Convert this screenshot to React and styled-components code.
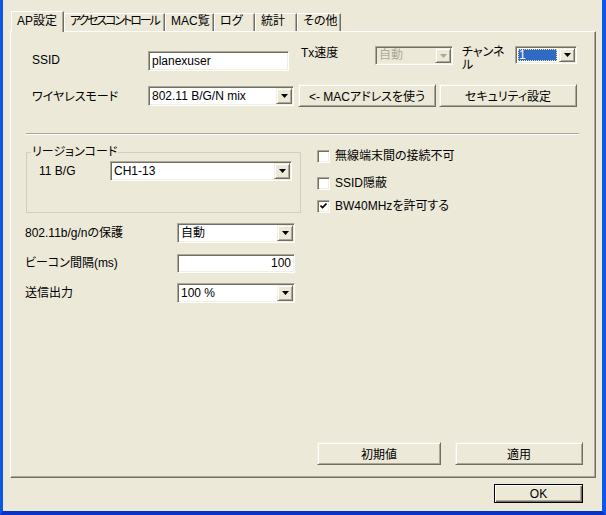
import React from 'react';
import styled, { createGlobalStyle, css } from 'styled-components';

const GlobalStyle = createGlobalStyle`
  html, body {
    margin: 0;
    padding: 0;
    background: #ece9d8;
  }
  body {
    font-family: "Liberation Sans", "Noto Sans CJK JP", sans-serif;
    font-size: 12px;
    color: #000;
    font-feature-settings: "palt";
  }
`;

const sunken = css`
  border: 1px solid;
  border-color: #aca899 #fff #fff #aca899;
  box-shadow: inset 1px 1px 0 #716f64, inset -1px -1px 0 #f1efe2;
  padding: 1px;
`;

const raised = css`
  border: 1px solid;
  border-color: #f1efe2 #716f64 #716f64 #f1efe2;
  box-shadow: inset 1px 1px 0 #fff, inset -1px -1px 0 #aca899;
`;

const StWindow = styled.div`
  width: 606px;
  height: 515px;
  box-sizing: border-box;
  background: #ece9d8;
  border-left: 3px solid #0b58e6;
  border-right: 4px solid #0b58e6;
  border-bottom: 4px solid #0832c8;
  display: flex;
  flex-direction: column;
  padding-top: 11px;
`;

const StTabStrip = styled.div`
  display: flex;
  align-items: flex-end;
  height: 20px;
  margin-left: 8px;
  position: relative;
  z-index: 1;
`;

const StTab = styled.div`
  box-sizing: border-box;
  width: ${({ $w }) => $w}px;
  height: ${({ $active }) => ($active ? 21 : 18)}px;
  margin-bottom: ${({ $active }) => ($active ? -1 : 0)}px;
  padding: ${({ $active }) => ($active ? '2px 0 0 5px' : '0 0 0 5px')};
  border-top: 1px solid #fff;
  border-left: 1px solid #fff;
  border-right: 1px solid #716f64;
  box-shadow: inset -1px 0 0 #aca899;
  background: #ece9d8;
  line-height: 15px;
  letter-spacing: ${({ $ls }) => $ls || 0}px;
  white-space: nowrap;
  overflow: hidden;
`;

const StPanel = styled.div`
  box-sizing: border-box;
  width: 586px;
  height: 447px;
  margin-left: 7px;
  border: 1px solid;
  border-color: #fff #716f64 #716f64 #fff;
  box-shadow: inset -1px -1px 0 #aca899;
  display: flex;
  flex-direction: column;
  padding-top: 14px;
`;

const StRow = styled.div`
  display: flex;
  align-items: flex-start;
  height: ${({ $h }) => $h}px;
  padding-left: ${({ $pl }) => $pl || 0}px;
`;

const StLabel = styled.div`
  flex: none;
  width: ${({ $w }) => $w}px;
  margin-left: ${({ $ml }) => $ml || 0}px;
  margin-top: ${({ $mt }) => $mt || 0}px;
  line-height: ${({ $lh }) => $lh || 14}px;
  white-space: nowrap;
`;

const StTextInput = styled.div`
  ${sunken};
  flex: none;
  box-sizing: border-box;
  width: ${({ $w }) => $w}px;
  height: ${({ $h }) => $h}px;
  margin-top: ${({ $mt }) => $mt || 0}px;
  background: #fff;
  padding: 1px 3px;
  line-height: ${({ $h }) => $h - 4}px;
  text-align: ${({ $right }) => ($right ? 'right' : 'left')};
`;

const StSelect = styled.div`
  ${sunken};
  flex: none;
  box-sizing: border-box;
  display: flex;
  width: ${({ $w }) => $w}px;
  height: ${({ $h }) => $h}px;
  margin-left: ${({ $ml }) => $ml || 0}px;
  margin-top: ${({ $mt }) => $mt || 0}px;
  background: ${({ $disabled }) => ($disabled ? '#ece9d8' : '#fff')};
  color: ${({ $disabled }) => ($disabled ? '#aca899' : '#000')};
`;

const StSelectValue = styled.div`
  flex: 1;
  padding-left: 2px;
  line-height: ${({ $h }) => $h - 4}px;
  white-space: nowrap;
  overflow: hidden;
`;

const StSelectHighlight = styled.div`
  flex: 1;
  margin: 1px 2px 1px 1px;
  padding-left: 1px;
  background: #316ac5;
  color: #fff;
  outline: 1px dotted #f5e38a;
  outline-offset: -1px;
  line-height: ${({ $h }) => $h - 6}px;
`;

const StArrowButton = styled.div`
  ${raised};
  box-sizing: border-box;
  width: 16px;
  flex: none;
  background: #ece9d8;
  display: flex;
  align-items: center;
  justify-content: center;
`;

const StButton = styled.button`
  ${raised};
  flex: none;
  box-sizing: border-box;
  width: ${({ $w }) => $w}px;
  height: ${({ $h }) => $h || 23}px;
  margin-left: ${({ $ml }) => $ml || 0}px;
  background: #ece9d8;
  font: inherit;
  color: #000;
  padding: 0;
  white-space: nowrap;
  ${({ $default }) =>
    $default &&
    css`
      border: 1px solid #000;
      box-shadow: inset 1px 1px 0 #fff, inset -1px -1px 0 #716f64,
        inset -2px -2px 0 #aca899;
    `};
`;

const StSeparator = styled.div`
  width: 553px;
  margin: 26px 0 0 15px;
  border-top: 1px solid #aca899;
  border-bottom: 1px solid #fff;
`;

const StLower = styled.div`
  display: flex;
  margin-top: 10px;
`;

const StLeftColumn = styled.div`
  display: flex;
  flex-direction: column;
  gap: 10px;
  padding-left: 14px;
`;

const StGroupBox = styled.fieldset`
  box-sizing: border-box;
  width: 275px;
  height: 68px;
  margin: 0 0 0 1px;
  padding: 0;
  border: 1px solid #d0d0bf;
  min-inline-size: auto;
`;

const StLegend = styled.legend`
  margin-left: 4px;
  padding: 0 1px;
  line-height: 14px;
`;

const StGroupBody = styled.div`
  display: flex;
  align-items: center;
  padding: 2px 0 0 12px;
`;

const StFormRow = styled.div`
  display: flex;
  align-items: center;
  height: 20px;
`;

const StRightColumn = styled.div`
  display: flex;
  flex-direction: column;
  margin-left: 16px;
`;

const StCheckRow = styled.div`
  display: flex;
  align-items: center;
  gap: 5px;
  height: 14px;
  margin-top: ${({ $mt }) => $mt}px;
  line-height: 14px;
  white-space: nowrap;
`;

const StCheckBox = styled.div`
  ${sunken};
  padding: 0;
  box-sizing: border-box;
  width: 13px;
  height: 13px;
  background: #fff;
  display: flex;
  align-items: center;
  justify-content: center;
`;

const StBottomRow = styled.div`
  display: flex;
  justify-content: flex-end;
  gap: 14px;
  margin-top: auto;
  padding: 0 12px 12px 0;
`;

const StFooter = styled.div`
  display: flex;
  justify-content: flex-end;
  padding: 6px 19px 0 0;
`;

const Arrow = ({ disabled }) => (
  <svg width="7" height="4" viewBox="0 0 7 4">
    <polygon points="0,0 7,0 3.5,4" fill={disabled ? '#aca899' : '#000'} />
  </svg>
);

const Select = ({ w, h = 20, ml, mt, value, disabled, focused }) => (
  <StSelect $w={w} $h={h} $ml={ml} $mt={mt} $disabled={disabled}>
    {focused ? (
      <StSelectHighlight $h={h}>{value}</StSelectHighlight>
    ) : (
      <StSelectValue $h={h}>{value}</StSelectValue>
    )}
    <StArrowButton>
      <Arrow disabled={disabled} />
    </StArrowButton>
  </StSelect>
);

const CheckItem = ({ checked, label, mt }) => (
  <StCheckRow $mt={mt}>
    <StCheckBox>
      {checked && (
        <svg width="7" height="7" viewBox="0 0 7 7">
          <polyline
            points="0.5,2.5 2.5,4.5 6.5,0.5"
            fill="none"
            stroke="#000"
            strokeWidth="1.6"
          />
        </svg>
      )}
    </StCheckBox>
    {label}
  </StCheckRow>
);

const tabs = [
  { label: 'AP設定', w: 53 },
  { label: 'アクセスコントロール', w: 101, ls: -2.1 },
  { label: 'MAC覧', w: 49 },
  { label: 'ログ', w: 41 },
  { label: '統計', w: 42 },
  { label: 'その他', w: 44 },
];

const App = () => {
  return (
    <>
      <GlobalStyle />
      <StWindow>
        <StTabStrip>
          {tabs.map((t, i) => (
            <StTab key={t.label} $w={t.w} $ls={t.ls} $active={i === 0}>
              {t.label}
            </StTab>
          ))}
        </StTabStrip>
        <StPanel>
          <StRow $h={38} $pl={21}>
            <StLabel $w={116} $mt={7}>SSID</StLabel>
            <StTextInput $w={141} $h={20} $mt={5}>
              planexuser
            </StTextInput>
            <StLabel $w={74} $ml={12}>Tx速度</StLabel>
            <Select w={78} h={19} value="自動" disabled />
            <StLabel $w={53} $ml={9} $lh={13}>
              チャンネ
              <br />ル
            </StLabel>
            <Select w={62} h={18} value="1" focused />
          </StRow>
          <StRow $h={23} $pl={21}>
            <StLabel $w={116} $mt={6}>ワイヤレスモード</StLabel>
            <Select w={146} mt={2} value="802.11 B/G/N mix" />
            <StButton $w={138} $ml={4}>
              &lt;- MACアドレスを使う
            </StButton>
            <StButton $w={138} $ml={3}>
              セキュリティ設定
            </StButton>
          </StRow>
          <StSeparator />
          <StLower>
            <StLeftColumn>
              <StGroupBox>
                <StLegend>リージョンコード</StLegend>
                <StGroupBody>
                  <StLabel $w={71}>11 B/G</StLabel>
                  <Select w={182} value="CH1-13" />
                </StGroupBody>
              </StGroupBox>
              <StFormRow>
                <StLabel $w={152}>802.11b/g/nの保護</StLabel>
                <Select w={118} value="自動" />
              </StFormRow>
              <StFormRow>
                <StLabel $w={152}>ビーコン間隔(ms)</StLabel>
                <StTextInput $w={118} $h={19} $right>
                  100
                </StTextInput>
              </StFormRow>
              <StFormRow>
                <StLabel $w={152}>送信出力</StLabel>
                <Select w={118} value="100 %" />
              </StFormRow>
            </StLeftColumn>
            <StRightColumn>
              <CheckItem mt={4} label="無線端末間の接続不可" />
              <CheckItem mt={13} label="SSID隠蔽" />
              <CheckItem mt={9} checked label="BW40MHzを許可する" />
            </StRightColumn>
          </StLower>
          <StBottomRow>
            <StButton $w={124}>初期値</StButton>
            <StButton $w={128}>適用</StButton>
          </StBottomRow>
        </StPanel>
        <StFooter>
          <StButton $w={89} $h={19} $default>
            OK
          </StButton>
        </StFooter>
      </StWindow>
    </>
  );
};

export default App;
